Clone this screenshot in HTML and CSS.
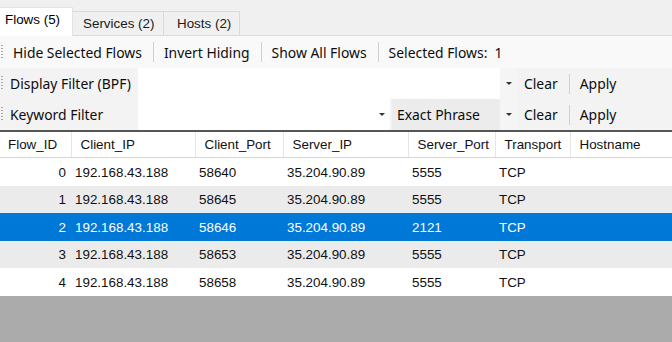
FILE: index.html
```html
<!DOCTYPE html>
<html>
<head>
<title>Flows</title>
<link rel="stylesheet" href="styles.css">
</head>
<body>
<div class="window">
  <div class="tabs">
    <div class="tab active">Flows (5)</div>
    <div class="tab t2">Services (2)</div>
    <div class="tab t3">Hosts (2)</div>
  </div>

  <div class="toolbar">
    <span class="grip"></span>
    <span class="tbtn">Hide Selected Flows</span>
    <span class="sep"></span>
    <span class="tbtn">Invert Hiding</span>
    <span class="sep"></span>
    <span class="tbtn">Show All Flows</span>
    <span class="sep"></span>
    <span class="tbtn">Selected Flows:&nbsp; 1</span>
  </div>

  <div class="filter">
    <span class="grip"></span>
    <span class="flabel">Display Filter (BPF)</span>
    <span class="finput"></span>
    <span class="arrow"></span>
    <span class="tbtn clear">Clear</span>
    <span class="sep"></span>
    <span class="tbtn">Apply</span>
  </div>

  <div class="filter">
    <span class="grip"></span>
    <span class="flabel">Keyword Filter</span>
    <span class="finput short"></span>
    <span class="arrow white"></span>
    <span class="combo">Exact Phrase</span>
    <span class="arrow"></span>
    <span class="tbtn clear">Clear</span>
    <span class="sep"></span>
    <span class="tbtn">Apply</span>
  </div>

  <table class="grid">
    <colgroup>
      <col class="c-id"><col class="c-cip"><col class="c-cport"><col class="c-sip"><col class="c-sport"><col class="c-tr"><col>
    </colgroup>
    <thead>
      <tr>
        <th>Flow_ID</th>
        <th>Client_IP</th>
        <th>Client_Port</th>
        <th>Server_IP</th>
        <th>Server_Port</th>
        <th>Transport</th>
        <th>Hostname</th>
      </tr>
    </thead>
    <tbody>
      <tr class="r28"><td class="num">0</td><td>192.168.43.188</td><td>58640</td><td>35.204.90.89</td><td>5555</td><td>TCP</td><td></td></tr>
      <tr class="alt"><td class="num">1</td><td>192.168.43.188</td><td>58645</td><td>35.204.90.89</td><td>5555</td><td>TCP</td><td></td></tr>
      <tr class="sel r28"><td class="num">2</td><td>192.168.43.188</td><td>58646</td><td>35.204.90.89</td><td>2121</td><td>TCP</td><td></td></tr>
      <tr class="alt"><td class="num">3</td><td>192.168.43.188</td><td>58653</td><td>35.204.90.89</td><td>5555</td><td>TCP</td><td></td></tr>
      <tr class="r28"><td class="num">4</td><td>192.168.43.188</td><td>58658</td><td>35.204.90.89</td><td>5555</td><td>TCP</td><td></td></tr>
    </tbody>
  </table>
  <div class="empty"></div>
</div>
</body>
</html>
```

FILE: styles.css
```css
body {
  margin: 0;
  padding: 0;
  font-family: "Liberation Sans", Arial, sans-serif;
  font-size: 13.4px;
  color: #000;
  background: #ababab;
}

.window {
  width: 672px;
  height: 342px;
  display: flex;
  flex-direction: column;
  overflow: hidden;
}

/* tab strip */
.tabs {
  height: 36px;
  flex: none;
  background: #f0f0f0;
  display: flex;
  align-items: flex-end;
  border-bottom: 1px solid #dadada;
  box-sizing: border-box;
}
.tab {
  height: 24px;
  line-height: 24px;
  border: 1px solid #d9d9d9;
  border-bottom: none;
  border-left: none;
  background: #f0f0f0;
  box-sizing: border-box;
  white-space: nowrap;
  color: #1a1a1a;
}
.tab.t2 { width: 91px; padding-left: 10px; }
.tab.t3 { width: 76px; padding-left: 13px; }
.tab.active {
  background: #fff;
  height: 29px;
  width: 73px;
  line-height: 24px;
  padding-left: 5px;
  margin-bottom: -1px;
  border-top: 1px solid #e3e3e3;
  border-right: 1px solid #e3e3e3;
  color: #000;
}

/* toolbars */
.toolbar, .filter {
  display: flex;
  align-items: center;
  flex: none;
  font-family: "Noto Sans", "Open Sans", sans-serif;
  font-size: 13.9px;
  color: #0d0d0d;
}
.toolbar {
  height: 32px;
  background: #f9f9f9;
}
.filter {
  height: 31px;
  background: #f3f3f3;
}
.grip {
  flex: none;
  width: 2px;
  height: 15px;
  margin: 0 10px 0 1px;
  background: repeating-linear-gradient(#a8a8a8 0 1px, transparent 1px 3px);
}
.filter .grip { margin-right: 7px; }
.tbtn {
  white-space: nowrap;
}
.sep {
  flex: none;
  width: 1px;
  height: 20px;
  background: #cfcfcf;
  margin: 0 10px 0 11px;
}
.flabel {
  flex: 0 0 128px;
  white-space: nowrap;
}
.finput {
  align-self: stretch;
  flex: 0 0 362px;
  background: #fff;
}
.finput.short { flex-basis: 235px; }
.arrow {
  flex: 0 0 17px;
  align-self: stretch;
  position: relative;
  background: #f5f5f5;
}
.arrow::after {
  content: "";
  position: absolute;
  left: 6px;
  top: 14px;
  border-left: 3px solid transparent;
  border-right: 3px solid transparent;
  border-top: 3px solid #333;
}
.arrow.white { background: #fff; margin-right: 2px; }
.combo {
  flex: 0 0 108px;
  box-sizing: border-box;
  background: #ececec;
  align-self: stretch;
  line-height: 31px;
  padding-left: 5px;
  white-space: nowrap;
}
.clear { margin-left: 7px; }

/* data grid */
.grid {
  flex: none;
  border-collapse: collapse;
  table-layout: fixed;
  width: 672px;
  border-top: 2px solid #555;
}
.grid th {
  background: #fff;
  font-weight: normal;
  text-align: left;
  height: 25px;
  padding: 0 0 0 9px;
  border-right: 1px solid #e5e5e5;
  border-bottom: 1px solid #d5d5d5;
  white-space: nowrap;
  overflow: hidden;
  color: #111;
}
.grid th:first-child { padding-left: 8px; }
.grid th:last-child { border-right: none; }
.grid td {
  height: 27px;
  padding: 0 0 0 4px;
  white-space: nowrap;
  overflow: hidden;
  background: #fff;
  color: #111;
}
.grid tr.r28 td { height: 28px; }
.grid td.num {
  text-align: right;
  padding: 0 5px 0 0;
}
.grid tr.alt td { background: #ebebeb; }
.grid tr.sel td { background: #0078d7; color: #fff; }

.c-id { width: 71px; }
.c-cip { width: 124px; }
.c-cport { width: 88px; }
.c-sip { width: 125px; }
.c-sport { width: 87px; }
.c-tr { width: 75px; }

.empty {
  flex: 1;
  background: #ababab;
}
```
